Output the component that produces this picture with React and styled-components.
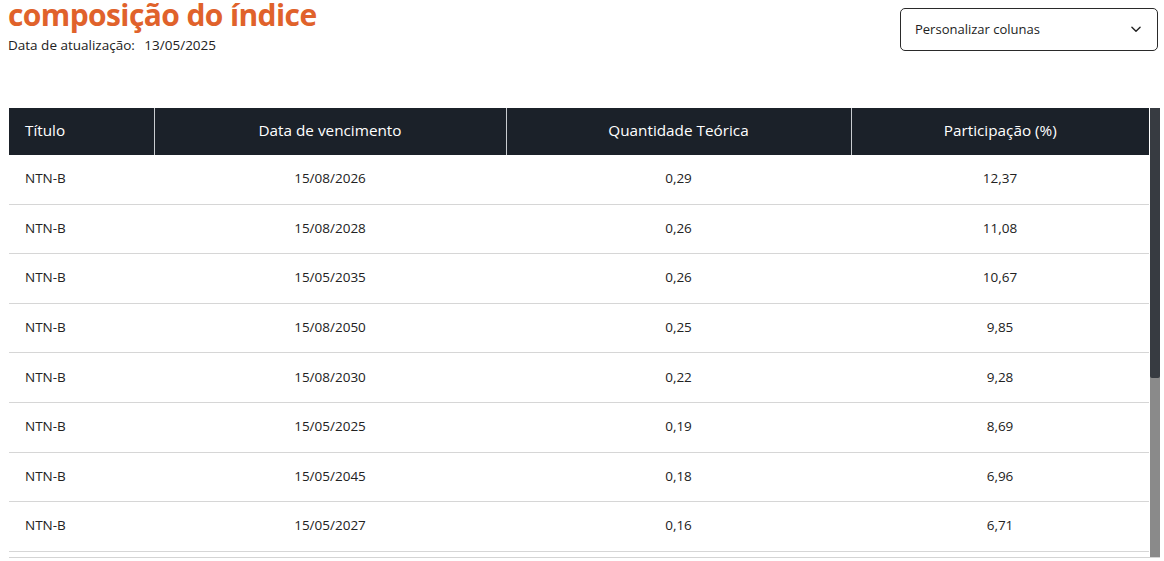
import styled, { createGlobalStyle } from "styled-components";

const GlobalStyle = createGlobalStyle`
  html, body {
    margin: 0;
    padding: 0;
    background: #ffffff;
    overflow: hidden;
  }
  body {
    font-family: "Open Sans", "Liberation Sans", sans-serif;
    color: #1f1f1f;
  }
`;

const Page = styled.div`
  width: 1164px;
  height: 561px;
  overflow: hidden;
`;

const TopBar = styled.div`
  display: flex;
  justify-content: space-between;
  align-items: flex-start;
  padding: 0 6px 0 8px;
  height: 108px;
`;

const Heading = styled.div`
  display: flex;
  flex-direction: column;
`;

const Title = styled.h1`
  margin: -4px 0 0;
  font-size: 30px;
  line-height: 38px;
  font-weight: 700;
  color: #e0622b;
  letter-spacing: -0.6px;
`;

const Updated = styled.div`
  margin-top: 2px;
  font-size: 13.5px;
  color: #222;
  span {
    margin-left: 6px;
  }
`;

const Select = styled.button`
  margin-top: 8px;
  width: 258px;
  height: 43px;
  display: flex;
  align-items: center;
  justify-content: space-between;
  padding: 0 14px 2px 14px;
  background: #fff;
  border: 1px solid #2a2a2a;
  border-radius: 5px;
  font-family: inherit;
  font-size: 13px;
  color: #222;
  cursor: pointer;
`;

const TableArea = styled.div`
  display: flex;
  margin-left: 9px;
  width: 1151px;
  height: 449px;
  border-bottom: 1px solid #d4d4d4;
`;

const TableClip = styled.div`
  width: 1140px;
  overflow: hidden;
`;

const Table = styled.table`
  width: 100%;
  border-collapse: collapse;
  table-layout: fixed;
`;

const Th = styled.th`
  height: 43px;
  padding: 0 16px 4px;
  background: #1b2129;
  color: #fff;
  font-size: 15.3px;
  font-weight: 500;
  text-align: ${(p) => (p.$left ? "left" : "center")};
  border-left: ${(p) => (p.$left ? "none" : "1px solid #c9ccd0")};
`;

const Td = styled.td`
  height: 46.6px;
  padding: 0 16px 2px;
  font-size: 13.5px;
  color: #222;
  text-align: ${(p) => (p.$left ? "left" : "center")};
  border-bottom: 1px solid #d6d6d6;
`;

const Scrollbar = styled.div`
  width: 10px;
  margin-left: 1px;
  display: flex;
  flex-direction: column;
  background: #8a8a8a;
`;

const Thumb = styled.div`
  height: 270px;
  background: #373b41;
  border-radius: 0 0 2px 2px;
`;

const rows = [
  ["NTN-B", "15/08/2026", "0,29", "12,37"],
  ["NTN-B", "15/08/2028", "0,26", "11,08"],
  ["NTN-B", "15/05/2035", "0,26", "10,67"],
  ["NTN-B", "15/08/2050", "0,25", "9,85"],
  ["NTN-B", "15/08/2030", "0,22", "9,28"],
  ["NTN-B", "15/05/2025", "0,19", "8,69"],
  ["NTN-B", "15/05/2045", "0,18", "6,96"],
  ["NTN-B", "15/05/2027", "0,16", "6,71"],
];

function Chevron() {
  return (
    <svg width="14" height="14" viewBox="0 0 24 24" fill="none" stroke="#222" strokeWidth="2.4" strokeLinecap="round" strokeLinejoin="round">
      <path d="M5 9l7 7 7-7" />
    </svg>
  );
}

export default function App() {
  return (
    <Page>
      <GlobalStyle />
      <TopBar>
        <Heading>
          <Title>composição do índice</Title>
          <Updated>
            Data de atualização: <span>13/05/2025</span>
          </Updated>
        </Heading>
        <Select>
          Personalizar colunas
          <Chevron />
        </Select>
      </TopBar>
      <TableArea>
        <TableClip>
          <Table>
            <colgroup>
              <col style={{ width: 145 }} />
              <col style={{ width: 352 }} />
              <col style={{ width: 345 }} />
              <col />
            </colgroup>
            <thead>
              <tr>
                <Th $left>Título</Th>
                <Th>Data de vencimento</Th>
                <Th>Quantidade Teórica</Th>
                <Th>Participação (%)</Th>
              </tr>
            </thead>
            <tbody>
              {rows.map((r, i) => (
                <tr key={i}>
                  <Td $left>{r[0]}</Td>
                  <Td>{r[1]}</Td>
                  <Td>{r[2]}</Td>
                  <Td>{r[3]}</Td>
                </tr>
              ))}
            </tbody>
          </Table>
        </TableClip>
        <Scrollbar>
          <Thumb />
        </Scrollbar>
      </TableArea>
    </Page>
  );
}
